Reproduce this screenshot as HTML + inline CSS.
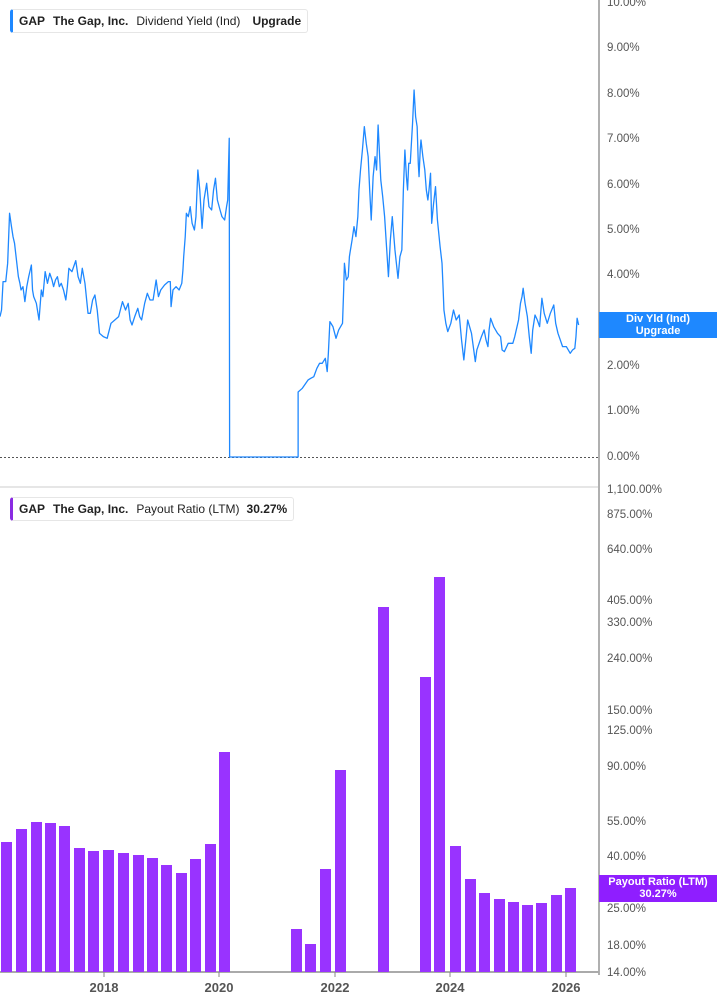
<!DOCTYPE html>
<html><head><meta charset="utf-8"><style>
body{margin:0;width:717px;height:1005px;background:#fff;position:relative;overflow:hidden;font-family:"Liberation Sans",sans-serif}
.lg{position:absolute;left:10px;height:22px;border:1px solid #e6e6e6;border-left:3px solid #1e88ff;border-radius:3px;font-size:12px;color:#222;line-height:22px;padding:0 6px;white-space:nowrap;background:#fff}
.lg b{font-weight:bold;margin-right:8px}
.lb{position:absolute;left:607px;font-size:11.5px;color:#555;line-height:12px}
.box{position:absolute;left:599px;width:118px;color:#fff;font-size:11px;font-weight:bold;text-align:center;line-height:12px}
.yr{position:absolute;top:980px;font-size:13px;font-weight:bold;color:#555;width:60px;text-align:center}
</style></head><body>
<svg width="717" height="1005" style="position:absolute;left:0;top:0">
<line x1="599" y1="0" x2="599" y2="975" stroke="#b0b0b0" stroke-width="2"/>
<line x1="0" y1="487" x2="598" y2="487" stroke="#ddd" stroke-width="1.5"/>
<line x1="0" y1="457.5" x2="598" y2="457.5" stroke="#555" stroke-width="1" stroke-dasharray="2,2"/>
<line x1="0" y1="972" x2="599" y2="972" stroke="#aaa" stroke-width="2"/>
<g transform="translate(0,90) scale(0.3827,0.3333)">
<polyline fill="none" stroke="#1e88ff" stroke-width="1.3" vector-effect="non-scaling-stroke" stroke-linejoin="round" points="0,680 4,660 8,575 15,575 20,520 25,370 30,410 34,440 38,460 42,500 48,560 52,580 55,600 60,590 65,635 70,590 75,560 82,525 85,600 88,620 95,640 102,690 108,600 112,620 118,545 124,580 130,550 136,570 140,590 145,570 150,560 155,590 160,580 166,600 172,630 176,590 180,535 188,545 198,512 204,560 210,580 215,535 222,580 230,670 236,670 242,630 248,615 254,660 260,730 270,740 280,745 290,700 300,690 310,680 320,635 328,660 335,640 340,690 345,705 352,680 360,655 365,680 370,690 378,640 385,610 392,630 400,630 404,600 408,570 414,620 420,600 430,585 440,575 445,575 447,650 452,600 460,590 468,600 475,580 478,540 480,500 484,440 487,370 492,380 497,350 502,400 508,420 512,380 517,240 522,300 528,415 533,330 540,280 546,350 553,360 558,300 563,265 568,330 575,360 580,380 587,390 592,350 595,330 599,145 600,1101 779,1101 779,906 790,895 805,870 812,865 820,860 828,835 835,820 842,820 850,805 855,845 858,790 862,695 870,710 878,745 885,720 895,700 898,600 900,520 905,570 910,560 913,500 915,485 920,450 925,410 930,440 935,380 938,300 942,240 947,180 952,110 957,160 962,200 966,300 970,390 975,260 980,200 984,240 988,105 992,200 995,270 1000,320 1005,380 1010,470 1015,560 1020,450 1025,380 1032,480 1040,565 1045,500 1050,480 1054,300 1058,180 1062,260 1065,300 1068,220 1072,220 1078,100 1082,0 1086,80 1090,110 1093,220 1095,260 1098,180 1100,150 1105,200 1110,240 1114,300 1118,330 1121,300 1125,250 1128,400 1133,340 1138,290 1143,390 1150,470 1155,520 1158,600 1160,660 1165,700 1170,725 1178,700 1185,660 1192,690 1200,675 1206,750 1212,810 1218,740 1222,690 1232,730 1242,815 1246,780 1252,760 1258,740 1265,720 1270,750 1275,770 1278,720 1282,685 1290,710 1300,730 1308,740 1312,780 1318,785 1328,760 1340,760 1345,740 1350,715 1355,690 1360,640 1364,620 1367,595 1372,640 1378,680 1383,740 1388,790 1392,720 1398,675 1404,690 1410,710 1416,625 1422,670 1430,700 1438,670 1447,645 1452,700 1458,730 1464,750 1470,770 1480,770 1490,790 1496,780 1502,775 1505,740 1508,685 1512,705"/>
</g>
<g fill="#9933ff">
<rect x="1" y="842" width="11" height="130"/>
<rect x="16" y="829" width="11" height="143"/>
<rect x="31" y="822" width="11" height="150"/>
<rect x="45" y="823" width="11" height="149"/>
<rect x="59" y="826" width="11" height="146"/>
<rect x="74" y="848" width="11" height="124"/>
<rect x="88" y="851" width="11" height="121"/>
<rect x="103" y="850" width="11" height="122"/>
<rect x="118" y="853" width="11" height="119"/>
<rect x="133" y="855" width="11" height="117"/>
<rect x="147" y="858" width="11" height="114"/>
<rect x="161" y="865" width="11" height="107"/>
<rect x="176" y="873" width="11" height="99"/>
<rect x="190" y="859" width="11" height="113"/>
<rect x="205" y="844" width="11" height="128"/>
<rect x="219" y="752" width="11" height="220"/>
<rect x="291" y="929" width="11" height="43"/>
<rect x="305" y="944" width="11" height="28"/>
<rect x="320" y="869" width="11" height="103"/>
<rect x="335" y="770" width="11" height="202"/>
<rect x="378" y="607" width="11" height="365"/>
<rect x="420" y="677" width="11" height="295"/>
<rect x="434" y="577" width="11" height="395"/>
<rect x="450" y="846" width="11" height="126"/>
<rect x="465" y="879" width="11" height="93"/>
<rect x="479" y="893" width="11" height="79"/>
<rect x="494" y="899" width="11" height="73"/>
<rect x="508" y="902" width="11" height="70"/>
<rect x="522" y="905" width="11" height="67"/>
<rect x="536" y="903" width="11" height="69"/>
<rect x="551" y="895" width="11" height="77"/>
<rect x="565" y="888" width="11" height="84"/>
</g>
<g stroke="#888" stroke-width="1"><line x1="104" y1="972" x2="104" y2="977"/><line x1="219" y1="972" x2="219" y2="977"/><line x1="335" y1="972" x2="335" y2="977"/><line x1="450" y1="972" x2="450" y2="977"/><line x1="566" y1="972" x2="566" y2="977"/></g>
</svg>
<div class="lg" style="top:9px"><b>GAP</b><b>The Gap, Inc.</b><span style="margin-right:12px">Dividend Yield (Ind)</span><b style="margin:0">Upgrade</b></div>
<div class="lg" style="top:497px;border-left-color:#8a2be2"><b>GAP</b><b>The Gap, Inc.</b><span style="margin-right:7px">Payout Ratio (LTM)</span><b style="margin:0">30.27%</b></div>

<div class="lb" style="top:-3px">10.00%</div>
<div class="lb" style="top:42px">9.00%</div>
<div class="lb" style="top:88px">8.00%</div>
<div class="lb" style="top:133px">7.00%</div>
<div class="lb" style="top:179px">6.00%</div>
<div class="lb" style="top:224px">5.00%</div>
<div class="lb" style="top:269px">4.00%</div>
<div class="lb" style="top:360px">2.00%</div>
<div class="lb" style="top:405px">1.00%</div>
<div class="lb" style="top:451px">0.00%</div>
<div class="lb" style="top:484px">1,100.00%</div>
<div class="lb" style="top:509px">875.00%</div>
<div class="lb" style="top:544px">640.00%</div>
<div class="lb" style="top:595px">405.00%</div>
<div class="lb" style="top:617px">330.00%</div>
<div class="lb" style="top:653px">240.00%</div>
<div class="lb" style="top:705px">150.00%</div>
<div class="lb" style="top:725px">125.00%</div>
<div class="lb" style="top:761px">90.00%</div>
<div class="lb" style="top:816px">55.00%</div>
<div class="lb" style="top:851px">40.00%</div>
<div class="lb" style="top:903px">25.00%</div>
<div class="lb" style="top:940px">18.00%</div>
<div class="lb" style="top:967px">14.00%</div>

<div class="box" style="top:312px;height:25px;background:#1e88ff;padding-top:1px">Div Yld (Ind)<br>Upgrade</div>
<div class="box" style="top:875px;height:26px;background:#8f1eff;padding-top:1px">Payout Ratio (LTM)<br>30.27%</div>

<div class="yr" style="left:74px">2018</div>
<div class="yr" style="left:189px">2020</div>
<div class="yr" style="left:305px">2022</div>
<div class="yr" style="left:420px">2024</div>
<div class="yr" style="left:536px">2026</div>
</body></html>
